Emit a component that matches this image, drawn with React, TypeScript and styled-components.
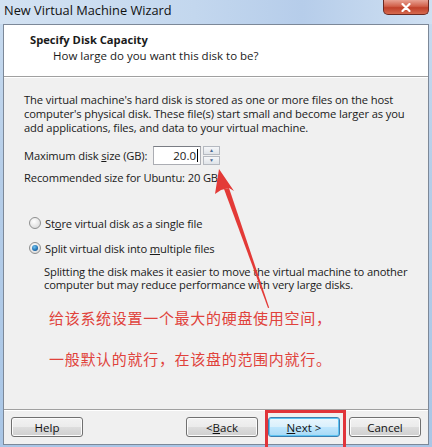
import React from "react";
import styled, { createGlobalStyle } from "styled-components";

const Global = createGlobalStyle`
  html, body { margin: 0; padding: 0; }
  body { width: 432px; height: 447px; overflow: hidden; background: #9fc0e4; }
  * { box-sizing: border-box; }
`;

const Frame = styled.div`
  position: relative;
  width: 432px;
  height: 447px;
  display: flex;
  flex-direction: column;
  background: linear-gradient(180deg, #c9dcf0 0%, #b5cde8 40%, #a9c6e6 100%);
  font-family: "Open Sans", "Noto Sans", sans-serif;
`;

const TitleBar = styled.div`
  height: 24px;
  display: flex;
  justify-content: space-between;
  align-items: flex-start;
  padding-left: 4px;
  background: linear-gradient(90deg, #d3e2f2 0%, #c3d7ee 45%, #b6cdea 70%, #cfe0f2 100%);
`;

const Title = styled.div`
  font-size: 12.8px;
  line-height: 20px;
  color: #111;
  font-family: "Open Sans", "Noto Sans", sans-serif;
`;

const Close = styled.div`
  width: 46px;
  height: 15px;
  margin-right: 3px;
  border: 1px solid #6b2a22;
  border-top: none;
  border-radius: 0 0 5px 5px;
  background: linear-gradient(180deg, #e8a293 0%, #d1604a 45%, #c0402a 55%, #d66a4f 100%);
  display: flex;
  justify-content: center;
  align-items: center;
`;

const Client = styled.div`
  flex: 1;
  margin: 0 3px 2px 3px;
  border: 1px solid #7c8898;
  background: #f0f0f0;
  display: flex;
  flex-direction: column;
  font-size: 11px;
  color: #1a1a1a;
`;

const Header = styled.div`
  height: 52px;
  background: #fff;
  border-bottom: 1px solid #a0a0a0;
  padding: 7px 0 0 26px;
  display: flex;
  flex-direction: column;
`;

const HeaderTitle = styled.div`
  font-weight: bold;
  font-size: 11.2px;
  line-height: 16px;
`;

const HeaderSub = styled.div`
  padding-left: 23px;
  font-size: 11.5px;
  line-height: 16px;
`;

const Body = styled.div`
  position: relative;
  flex: 1;
  border-top: 1px solid #fff;
  padding: 15px 20px 0 20px;
  display: flex;
  flex-direction: column;
`;

const Para = styled.p`
  margin: 0;
  font-size: 11.2px;
  line-height: 14px;
  letter-spacing: -0.12px;
`;

const SizeRow = styled.div`
  margin-top: 11px;
  display: flex;
  align-items: center;
  height: 19px;
`;

const Label = styled.span`
  width: 129px;
  font-size: 11.2px;
  letter-spacing: -0.15px;
`;

const Input = styled.div`
  width: 48px;
  height: 19px;
  border: 1px solid #abadb3;
  border-top-color: #7a7d84;
  background: #fff;
  display: flex;
  justify-content: flex-end;
  align-items: center;
  padding-right: 2px;
  font-size: 11.5px;
`;

const Caret = styled.span`
  display: inline-block;
  width: 1px;
  height: 13px;
  background: #000;
  margin-left: 1px;
`;

const Spinner = styled.div`
  margin-left: 2px;
  width: 17px;
  height: 19px;
  display: flex;
  flex-direction: column;
  gap: 1px;
`;

const SpinBtn = styled.div`
  flex: 1;
  border: 1px solid #b5b9c0;
  background: linear-gradient(180deg, #f6f7f9, #dfe3e8);
  display: flex;
  justify-content: center;
  align-items: center;
  font-size: 5px;
  color: #4a6a92;
  line-height: 1;
`;

const Recommended = styled.div`
  margin-top: 6px;
  font-size: 11.2px;
  line-height: 14px;
  letter-spacing: -0.15px;
`;

const RadioRow = styled.div<{ $top: number }>`
  margin-top: ${(p) => p.$top}px;
  display: flex;
  align-items: center;
  gap: 4px;
  height: 14px;
  padding-left: 5px;
  font-size: 11.2px;
  letter-spacing: -0.15px;
`;

const Radio = styled.span<{ $on?: boolean }>`
  width: 12px;
  height: 12px;
  border-radius: 50%;
  border: 1px solid #8e8f8f;
  background: radial-gradient(circle at 40% 35%, #ffffff 0%, #e4e4e4 60%, #cfcfcf 100%);
  display: flex;
  justify-content: center;
  align-items: center;
  &::after {
    content: "";
    display: ${(p) => (p.$on ? "block" : "none")};
    width: 6px;
    height: 6px;
    border-radius: 50%;
    background: radial-gradient(circle at 40% 35%, #6fc3f0 0%, #1f6fb1 60%, #0f3f6e 100%);
  }
`;

const Desc = styled.p`
  margin: 10px 0 0 20px;
  font-size: 11.2px;
  line-height: 13px;
  letter-spacing: -0.15px;
`;

const Note = styled.div<{ $top: number }>`
  margin-top: ${(p) => p.$top}px;
  padding-left: 25px;
  color: #e0423b;
  font-family: "Noto Sans CJK SC", sans-serif;
  font-size: 15px;
  letter-spacing: 0.7px;
  line-height: 20px;
`;

const Underline = styled.span`
  text-decoration: underline;
`;

const Footer = styled.div`
  height: 35px;
  border-top: 1px solid #a0a0a0;
  box-shadow: inset 0 1px 0 #fff;
  display: flex;
  align-items: center;
  padding: 0 7px 0 7px;
`;

const Button = styled.div<{ $focus?: boolean }>`
  width: 72px;
  height: 20px;
  border: 1px solid ${(p) => (p.$focus ? "#3c7fb1" : "#707070")};
  border-radius: 3px;
  background: ${(p) =>
    p.$focus
      ? "linear-gradient(180deg, #eaf6fd 0%, #d9f0fc 50%, #bee6fd 51%, #a7d9f5 100%)"
      : "linear-gradient(180deg, #f2f2f2 0%, #ebebeb 50%, #dddddd 51%, #cfcfcf 100%)"};
  box-shadow: inset 0 0 0 1px ${(p) => (p.$focus ? "#5ec4f2" : "#fcfcfc")};
  display: flex;
  justify-content: center;
  align-items: center;
  font-size: 11.5px;
  color: #111;
`;

const Spacer = styled.div`
  flex: 1;
`;

const Gap = styled.div<{ $w: number }>`
  width: ${(p) => p.$w}px;
`;

const Highlight = styled.div`
  position: absolute;
  left: 265px;
  top: 410px;
  width: 81px;
  height: 40px;
  border: 3px solid #e0343a;
  pointer-events: none;
`;

const ArrowSvg = styled.svg`
  position: absolute;
  left: 0;
  top: 0;
  pointer-events: none;
`;

export default function App() {
  return (
    <>
      <Global />
      <Frame>
        <TitleBar>
          <Title>New Virtual Machine Wizard</Title>
          <Close>
            <svg width="10" height="9" viewBox="0 0 10 9">
              <path d="M1.5 1 L8.5 8 M8.5 1 L1.5 8" stroke="#fff" strokeWidth="2.2" strokeLinecap="round" />
            </svg>
          </Close>
        </TitleBar>
        <Client>
          <Header>
            <HeaderTitle>Specify Disk Capacity</HeaderTitle>
            <HeaderSub>How large do you want this disk to be?</HeaderSub>
          </Header>
          <Body>
            <Para>
              The virtual machine's hard disk is stored as one or more files on the host
              computer's physical disk. These file(s) start small and become larger as you
              add applications, files, and data to your virtual machine.
            </Para>
            <SizeRow>
              <Label>
                Maximum disk <Underline>s</Underline>ize (GB):
              </Label>
              <Input>
                20.0
                <Caret />
              </Input>
              <Spinner>
                <SpinBtn>▲</SpinBtn>
                <SpinBtn>▼</SpinBtn>
              </Spinner>
            </SizeRow>
            <Recommended>Recommended size for Ubuntu: 20 GB</Recommended>
            <RadioRow $top={31}>
              <Radio />
              <span>
                St<Underline>o</Underline>re virtual disk as a single file
              </span>
            </RadioRow>
            <RadioRow $top={11}>
              <Radio $on />
              <span>
                Split virtual disk into <Underline>m</Underline>ultiple files
              </span>
            </RadioRow>
            <Desc>
              Splitting the disk makes it easier to move the virtual machine to another
              <br />
              computer but may reduce performance with very large disks.
            </Desc>
            <Note $top={17}>给该系统设置一个最大的硬盘使用空间，</Note>
            <Note $top={21}>一般默认的就行，在该盘的范围内就行。</Note>
          </Body>
          <Footer>
            <Button>Help</Button>
            <Spacer />
            <Button>
              &lt; <Underline>B</Underline>ack
            </Button>
            <Gap $w={10} />
            <Button $focus>
              <Underline>N</Underline>ext &gt;
            </Button>
            <Gap $w={9} />
            <Button>Cancel</Button>
          </Footer>
        </Client>
        <ArrowSvg width="432" height="447" viewBox="0 0 432 447">
          <polygon points="268,308 269.2,307.8 229,188 224,189" fill="#e33a37" />
          <polygon points="219,169 215,194 221,190 229,188 234,191" fill="#e33a37" />
        </ArrowSvg>
        <Highlight />
      </Frame>
    </>
  );
}
